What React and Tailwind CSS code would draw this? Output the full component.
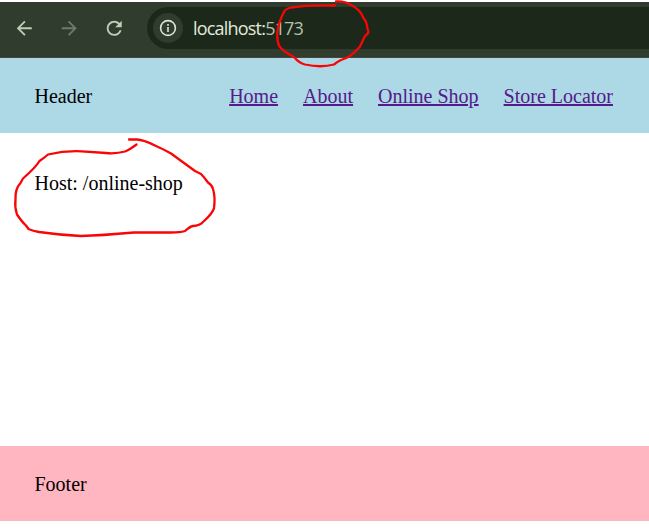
const links = ["Home", "About", "Online Shop", "Store Locator"];

function NavIcon({ d, className }) {
  return (
    <svg viewBox="0 0 24 24" className={`size-[22.5px] shrink-0 fill-current ${className}`}>
      <path d={d} />
    </svg>
  );
}

function BrowserBar() {
  return (
    <div className="mt-0.5 flex h-14 shrink-0 items-center border-b border-[#44483a] bg-[#303d2e] pb-[3px] pl-[13px]">
      <NavIcon className="text-[#bccfb4]" d="M20 11H7.83l5.59-5.59L12 4l-8 8 8 8 1.41-1.41L7.83 13H20v-2z" />
      <NavIcon className="ml-[22px] text-[#6b7c66]" d="m12 4-1.41 1.41L16.17 11H4v2h12.17l-5.58 5.59L12 20l8-8z" />
      <NavIcon
        className="ml-[23px] text-[#bccfb4]"
        d="M17.65 6.35C16.2 4.9 14.21 4 12 4c-4.42 0-7.99 3.58-7.99 8s3.57 8 7.99 8c3.73 0 6.84-2.55 7.73-6h-2.08c-.82 2.33-3.04 4-5.65 4-3.31 0-6-2.69-6-6s2.69-6 6-6c1.66 0 3.14.69 4.22 1.78L13 11h7V4l-2.35 2.35z"
      />
      <div className="ml-[21.5px] flex h-[42px] min-w-0 flex-1 items-center rounded-l-full bg-[#1c291a] pl-1.5">
        <div className="flex size-[30px] items-center justify-center rounded-full bg-[#303d2e]">
          <svg viewBox="0 0 18 18" className="size-[18px] text-[#dde6d6]">
            <circle cx="9" cy="9" r="7.4" fill="none" stroke="currentColor" strokeWidth="1.6" />
            <path d="M8.2 8h1.6v5H8.2zM8.2 5h1.6v1.7H8.2z" fill="currentColor" />
          </svg>
        </div>
        <span className="ml-2.5 whitespace-nowrap font-['Open_Sans',sans-serif] text-[18px] leading-6 tracking-[-0.8px] text-[#e2ebdc]">
          localhost:<span className="text-[#b4c0ac]">5173</span>
        </span>
      </div>
    </div>
  );
}

function Annotations() {
  return (
    <svg
      viewBox="0 0 649 529"
      className="pointer-events-none absolute inset-0 h-full w-full"
      fill="none"
      stroke="#fa0505"
      strokeWidth="2.3"
      strokeLinecap="round"
      strokeLinejoin="round"
    >
      <path d="M335 5.5 Q309 4.7 291 7.5 Q285 9 284 12 Q279 21 277.5 31 Q276.5 41 279.5 46.5 Q284 52 294 57 Q299 63 305 64.5 Q321 68 334 64.5 Q337 62 341 60 Q350 58 360 46.5 Q363 40 365 36 Q370 33 367.5 29 Q367 22 363.5 18 Q360 9 351 5 Q345 1 336 1.5" />
      <path d="M136.500 144.500 Q129 150 125 151.500 Q116 154 106 153 L82 151.300 Q65 150.500 48 154.500 Q44 158 39.500 161 Q36 167 23 178.500 L20.500 183 Q15 189 15.500 199 Q14.500 207 17 214.500 Q22 222 26 225.500 L28.500 229 Q33 231 39 232 Q60 235 81 236 Q101 235.500 134 232.500 L171 232.500 Q180 232.500 185 231 Q190 226.500 193 226 Q200 225.500 203 222 Q213 213 214 208 Q215.500 197 213 189 Q212 185 208 182.500 Q204 177 201 174 L195 171 L171 153.500 Q162 148.500 156 146 Q143 139.500 137 139.500 L129 139.500" />
    </svg>
  );
}

export default function App() {
  return (
    <div className="relative flex h-[529px] w-[649px] flex-col overflow-hidden bg-white font-['Liberation_Serif',serif] text-[20px] leading-[23px] text-black">
      <BrowserBar />
      <header className="flex h-[75px] shrink-0 items-center justify-between bg-[#add8e6] pl-[34.5px] pr-9 pt-px">
        <span>Header</span>
        <nav className="flex gap-[25px]">
          {links.map((label) => (
            <a key={label} href="#" className="text-[#551a8b] underline decoration-2 underline-offset-1">
              {label}
            </a>
          ))}
        </nav>
      </header>
      <main className="flex-1 pl-[34.5px] pt-[39px]">Host: /online-shop</main>
      <footer className="mb-2 flex h-[75px] shrink-0 items-center bg-[#ffb6c1] pl-[34.5px] pt-px">Footer</footer>
      <Annotations />
    </div>
  );
}
